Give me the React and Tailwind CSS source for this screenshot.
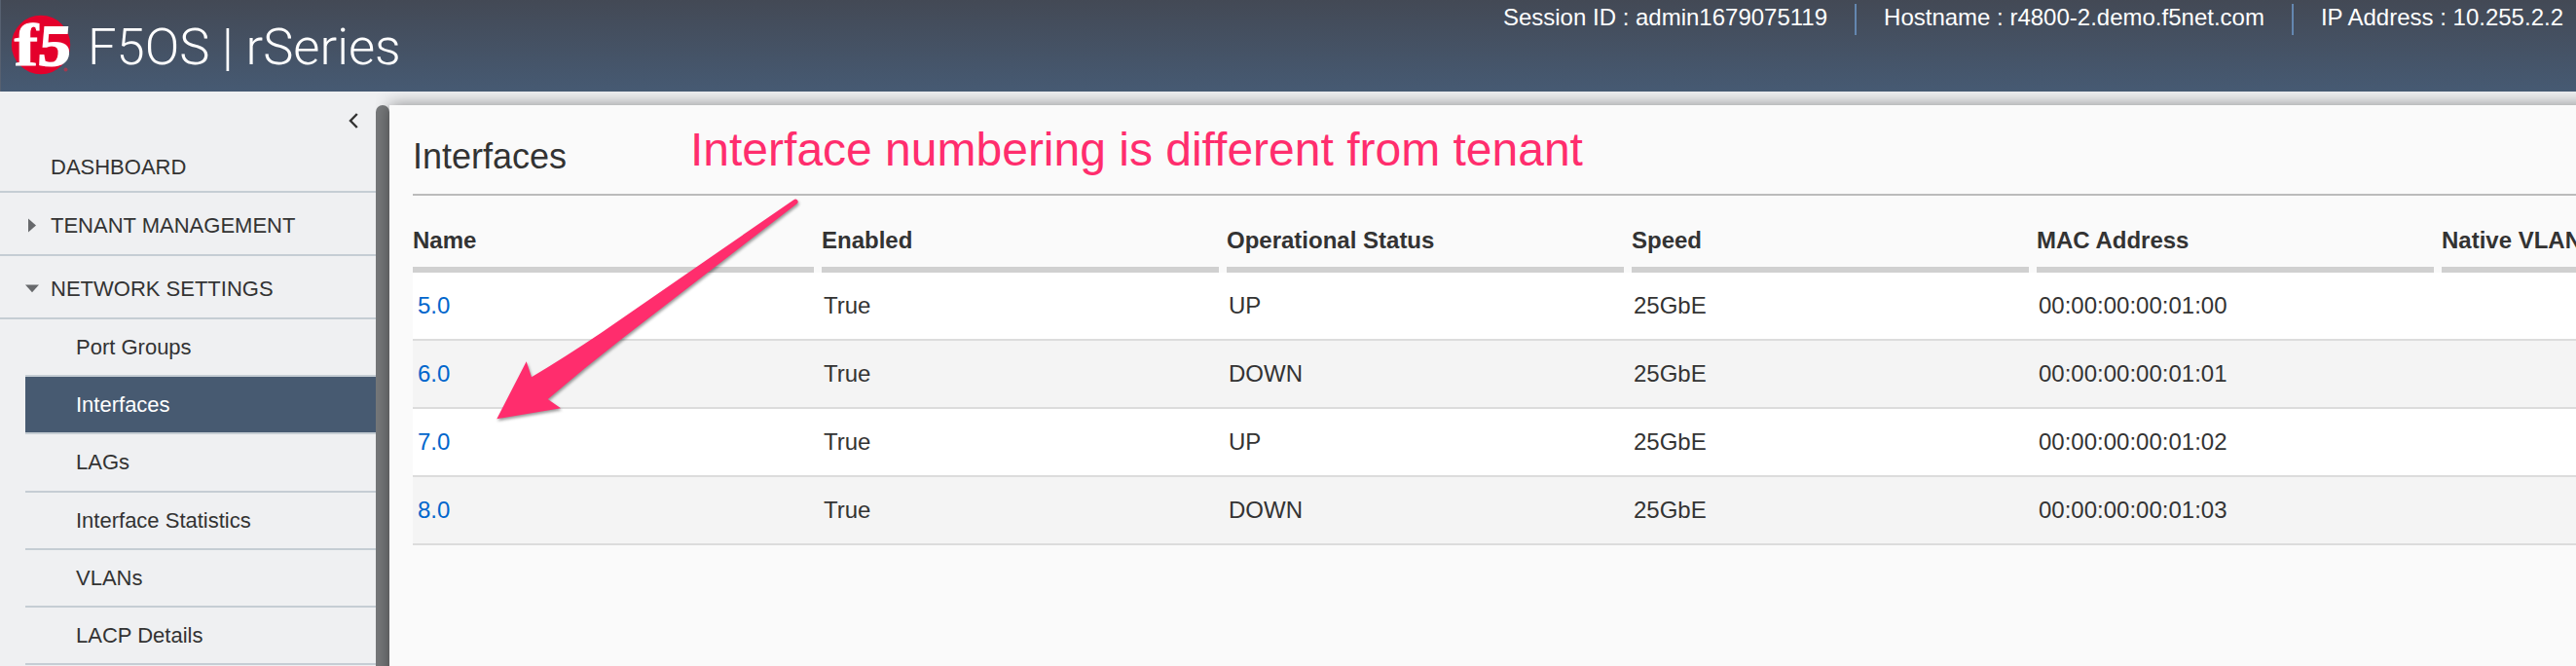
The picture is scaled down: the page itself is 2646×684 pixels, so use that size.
import React from "react";

const subItems = [
  { label: "Port Groups", h: "h-[59px]" },
  { label: "Interfaces", h: "h-[59px]", active: true },
  { label: "LAGs", h: "h-[60px]" },
  { label: "Interface Statistics", h: "h-[59px]" },
  { label: "VLANs", h: "h-[59px]" },
  { label: "LACP Details", h: "h-[59px]" },
];

const headers = ["Name", "Enabled", "Operational Status", "Speed", "MAC Address", "Native VLAN"];

const rows = [
  ["5.0", "True", "UP", "25GbE", "00:00:00:00:01:00", ""],
  ["6.0", "True", "DOWN", "25GbE", "00:00:00:00:01:01", ""],
  ["7.0", "True", "UP", "25GbE", "00:00:00:00:01:02", ""],
  ["8.0", "True", "DOWN", "25GbE", "00:00:00:00:01:03", ""],
];

function Logo() {
  return (
    <svg width="78" height="94" viewBox="0 0 78 94" className="shrink-0">
      <circle cx="42" cy="46" r="30.2" fill="#e4002b" />
      <g fill="#fff" stroke="#fff" fontFamily="Liberation Serif, serif" fontWeight="700">
        <text fontSize="62" strokeWidth="0.8" transform="translate(14.5 67.2) scale(1.2 1)">
          f
        </text>
        <text fontSize="60" strokeWidth="1.6" transform="translate(38 67) skewX(-5) scale(1.12 1)">
          5
        </text>
      </g>
      <circle cx="67.5" cy="71.5" r="2" fill="#a03a50" />
    </svg>
  );
}

function Header() {
  return (
    <header className="relative z-20 flex h-[94px] shrink-0 justify-between border-l border-[#566070] bg-linear-to-b from-[#434955] to-[#465a73] text-white">
      <div className="-ml-px flex h-[94px] items-start">
        <Logo />
        <div className="pt-[18px] pl-[12px] font-['Roboto',sans-serif] text-[52.5px] leading-[60px] font-light whitespace-nowrap">
          F5OS | rSeries
        </div>
      </div>
      <div className="flex items-start pt-1 pr-[13px] text-2xl leading-[27px] whitespace-nowrap">
        <span>Session ID : admin1679075119</span>
        <span className="mr-[28px] ml-[28px] h-8 w-[2px] bg-[#6487b0]" />
        <span>Hostname : r4800-2.demo.f5net.com</span>
        <span className="mr-[28px] ml-[28px] h-8 w-[2px] bg-[#6487b0]" />
        <span>IP Address : 10.255.2.2</span>
      </div>
    </header>
  );
}

function Sidebar() {
  return (
    <nav className="relative z-10 flex w-[386px] shrink-0 flex-col bg-[#eff0f2] text-[22px] leading-[25px]">
      <div className="flex h-[47px] justify-end pt-[22px] pr-[18px]">
        <svg width="10" height="16" viewBox="0 0 10 16" fill="none" stroke="#333" strokeWidth="2.4">
          <path d="M8.8 1 L2 8 L8.8 15" />
        </svg>
      </div>
      <div className="flex h-[57px] items-start border-b-2 border-[#c5cdd4] pt-[18px] pl-[52px]">DASHBOARD</div>
      <div className="flex h-[65px] items-start border-b-2 border-[#c5cdd4] pt-[21px]">
        <svg width="52" height="25" viewBox="0 1 52 25" fill="#67696c">
          <path d="M29 6.5 L37 13.5 L29 20.5 Z" />
        </svg>
        TENANT MANAGEMENT
      </div>
      <div className="flex h-[65px] items-start border-b-2 border-[#c5cdd4] pt-[21px]">
        <svg width="52" height="25" viewBox="0 1 52 25" fill="#67696c">
          <path d="M26 9.5 L40 9.5 L33 17.3 Z" />
        </svg>
        NETWORK SETTINGS
      </div>
      <div className="flex flex-col pl-[26px]">
        {subItems.map((s) => (
          <div
            key={s.label}
            className={`${s.h} flex items-start border-b-2 border-[#c5cdd4] pt-[16px] pl-[52px] ${
              s.active ? "bg-[#475a71] text-white" : ""
            }`}
          >
            {s.label}
          </div>
        ))}
      </div>
    </nav>
  );
}

const cols = "grid grid-cols-[420px_416px_416px_416px_416px_416px]";

function InterfacesTable() {
  return (
    <div className="overflow-hidden text-2xl leading-[27px] whitespace-nowrap">
      <div className={cols}>
        {headers.map((h) => (
          <div key={h} className="mr-2 h-[79px] border-b-[6px] border-[#d0d0d0] pt-[32px] font-bold">
            {h}
          </div>
        ))}
      </div>
      {rows.map((r) => (
        <div key={r[0]} className={`${cols} h-[70px] border-b-2 border-[#dcdcdc] odd:bg-[#f4f4f4] even:bg-white`}>
          {r.map((c, i) => (
            <div key={i} className={i === 0 ? "pt-[20px] pl-[5px] text-[#0066cc]" : "pt-[20px] pl-[2px]"}>
              {c}
            </div>
          ))}
        </div>
      ))}
    </div>
  );
}

function Annotation() {
  return (
    <>
      <div className="absolute top-[127px] left-[709px] z-30 text-[48px] leading-[53px] whitespace-nowrap text-[#ff2d6d]">
        Interface numbering is different from tenant
      </div>
      <svg
        className="absolute top-[190px] left-[500px] z-30 drop-shadow-[1px_2px_1.5px_rgba(0,0,0,0.4)]"
        width="360"
        height="260"
        viewBox="0 0 360 260"
        fill="#ff2d6d"
      >
        <path d="M10.3 240.3 L40.7 181.3 L46 197.3 Q80 177 118 151.5 L315.3 15.2 A2.6 2.6 0 0 1 318.6 19.3 L140 157 Q100 188 62.7 220 L76 229.3 Z" />
      </svg>
    </>
  );
}

export default function App() {
  return (
    <div className="relative flex h-[684px] w-[2646px] flex-col overflow-hidden bg-[#eff0f2] font-['Liberation_Sans',Arial,sans-serif] text-[#333]">
      <Header />
      <div className="flex min-h-0 flex-1 overflow-hidden">
        <Sidebar />
        <div className="mt-[14px] w-[14px] shrink-0 rounded-t-[7px] bg-[#77797b]" />
        <main className="mt-[14px] -mr-10 -mb-10 flex-1 overflow-hidden bg-[#fafafa] pl-[24px] shadow-[0_0_16px_rgba(0,0,0,0.44)]">
          <h1 className="h-[93px] border-b-2 border-[#bbb] pt-[32px] text-[36px] leading-[41px]">Interfaces</h1>
          <InterfacesTable />
        </main>
      </div>
      <Annotation />
    </div>
  );
}
